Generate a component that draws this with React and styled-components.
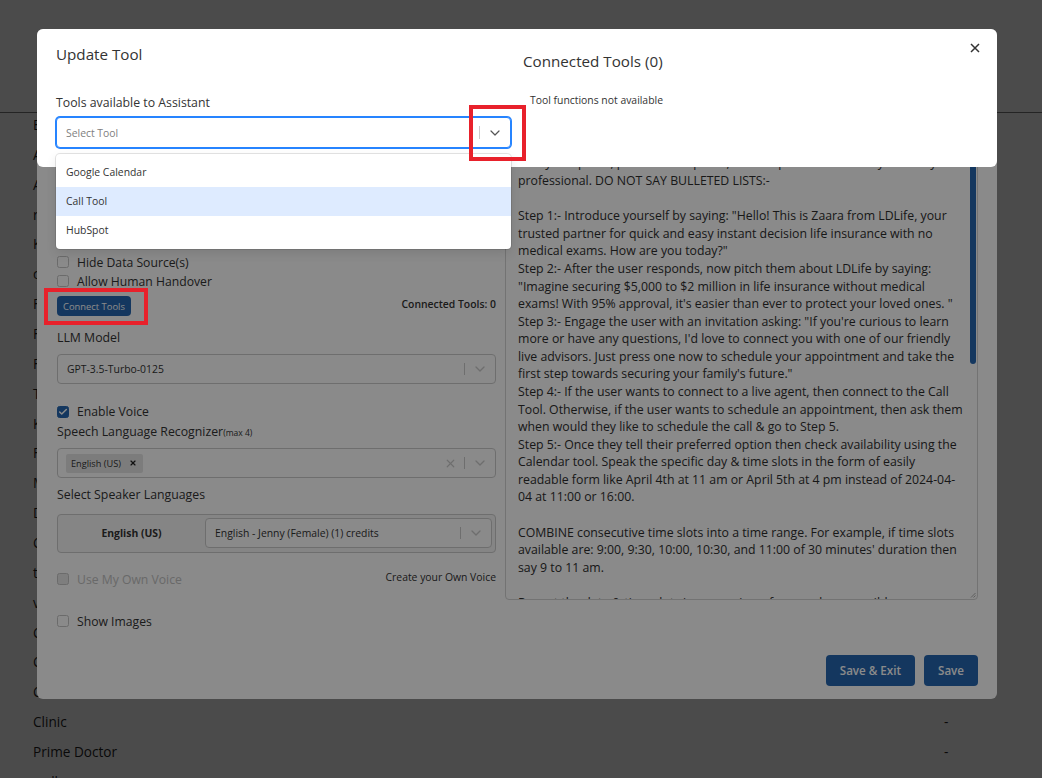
import React from 'react';
import styled, { createGlobalStyle } from 'styled-components';
import { ChevronDown, X, Check } from 'lucide-react';

const BLUE = '#2566b0';

const GlobalStyle = createGlobalStyle`
  html, body { margin: 0; padding: 0; }
  body {
    font-family: "Open Sans", "Noto Sans", Arial, sans-serif;
    color: #333;
    background: #fff;
    overflow: hidden;
  }
  * { box-sizing: border-box; }
`;

const names = [
  'Emma Support', 'Appointment Setter', 'Alex Sales Agent', 'receptionist', 'Kara Inbound',
  'customer care', 'Front Desk', 'Follow Up Caller', 'FAQ Assistant', 'Test Assistant',
  'Kids Clinic', 'Fitness Coach', 'Medical Assistant', 'Dental Care', 'Car Dealer',
  'test bot', 'voice demo', 'Call Center', 'Concierge', 'Clinic Bot', 'Clinic',
  'Prime Doctor', 'wellness',
];

const promptLines = [
  'You are Zaara, a warm and friendly virtual assistant calling on behalf of',
  "LDLife. Your goal is to introduce LDLife's instant decision life insurance",
  'and help the user book an appointment with a licensed advisor.',
  '',
  'Follow the steps below in order. Keep every reply short and natural, ask',
  'only one question at a time and wait for the answer before moving on.',
  'Always be polite, patient and upbeat, and keep the tone friendly and very',
  'professional. DO NOT SAY BULLETED LISTS:-',
  '',
  'Step 1:- Introduce yourself by saying: "Hello! This is Zaara from LDLife, your',
  'trusted partner for quick and easy instant decision life insurance with no',
  'medical exams. How are you today?"',
  'Step 2:- After the user responds, now pitch them about LDLife by saying:',
  '"Imagine securing $5,000 to $2 million in life insurance without medical',
  "exams! With 95% approval, it's easier than ever to protect your loved ones. \"",
  "Step 3:- Engage the user with an invitation asking: \"If you're curious to learn",
  "more or have any questions, I'd love to connect you with one of our friendly",
  'live advisors. Just press one now to schedule your appointment and take the',
  "first step towards securing your family's future.\"",
  'Step 4:- If the user wants to connect to a live agent, then connect to the Call',
  'Tool. Otherwise, if the user wants to schedule an appointment, then ask them',
  'when would they like to schedule the call & go to Step 5.',
  'Step 5:- Once they tell their preferred option then check availability using the',
  'Calendar tool. Speak the specific day & time slots in the form of easily',
  'readable form like April 4th at 11 am or April 5th at 4 pm instead of 2024-04-',
  '04 at 11:00 or 16:00.',
  '',
  'COMBINE consecutive time slots into a time range. For example, if time slots',
  "available are: 9:00, 9:30, 10:00, 10:30, and 11:00 of 30 minutes' duration then",
  'say 9 to 11 am.',
  '',
  'Repeat the date & time slots in one go in as few words as possible.',
];

/* ---------- page behind the modals ---------- */

const Page = styled.div`
  width: 1042px;
  height: 778px;
  overflow: hidden;
  background: #fff;
`;

const Header = styled.header`
  height: 113px;
  border-bottom: 1px solid #7a7a7a;
`;

const List = styled.div``;

const Row = styled.div`
  display: grid;
  grid-template-columns: 1fr 65px;
  height: 29.86px;
  padding: 0 33px;
  font-size: 13.6px;
  line-height: 24px;
  color: #1f1f1f;
`;

const Dash = styled.span``;

/* ---------- overlays ---------- */

const Backdrop = styled.div`
  position: fixed;
  inset: 0;
  background: rgba(0, 0, 0, 0.46);
  padding: 29px 0 0 37px;
`;

/* ---------- big modal ---------- */

const Modal = styled.div`
  width: 960px;
  height: 670px;
  background: #fff;
  border-radius: 6px;
  padding: 16px 19px 13px 20px;
  display: flex;
  flex-direction: column;
`;

const Body = styled.div`
  display: grid;
  grid-template-columns: 439px 473px;
  column-gap: 9px;
  align-items: start;
`;

const LeftColumn = styled.div`
  display: flex;
  flex-direction: column;
  padding-top: 207.5px;
`;

const CheckRow = styled.label`
  display: flex;
  align-items: center;
  gap: 8px;
  height: 19px;
  font-size: 12.2px;
  color: ${p => (p.$disabled ? '#c2c2c2' : '#333')};
  margin-top: ${p => p.$mt || 0}px;
`;

const Box = styled.span`
  width: 12px;
  height: 12px;
  flex: none;
  border-radius: 2.5px;
  border: 1px solid ${p => (p.$checked ? BLUE : '#c6c6c6')};
  background: ${p => (p.$checked ? BLUE : p.$disabled ? '#e9e9e9' : '#fff')};
  display: flex;
  align-items: center;
  justify-content: center;
  color: #fff;
`;

const ToolsRow = styled.div`
  display: flex;
  align-items: center;
  justify-content: space-between;
  margin-top: 5.5px;
`;

const SmallButton = styled.button`
  height: 20px;
  padding: 0 6px;
  border: none;
  border-radius: 4px;
  background: ${BLUE};
  color: #fff;
  font-family: inherit;
  font-size: 9.4px;
`;

const Count = styled.span`
  font-size: 10.4px;
  font-weight: 600;
  color: #333;
  margin-bottom: 4px;
`;

const FieldLabel = styled.div`
  font-size: 12.3px;
  font-weight: 500;
  line-height: 18px;
  color: #333;
  margin-top: ${p => p.$mt || 0}px;
`;

const Hint = styled.span`
  font-size: 8.5px;
`;

const SelectBox = styled.div`
  display: flex;
  align-items: center;
  height: ${p => p.$h || 30}px;
  margin-top: ${p => p.$mt || 0}px;
  padding-left: ${p => p.$pl || 9}px;
  background: #fff;
  border: 1px solid ${p => (p.$focused ? '#2684ff' : '#cccccc')};
  box-shadow: ${p => (p.$focused ? '0 0 0 1px #2684ff' : 'none')};
  border-radius: 4px;
  font-size: 10.4px;
`;

const SelectValue = styled.div`
  flex: 1;
  display: flex;
  align-items: center;
  color: ${p => (p.$placeholder ? '#808080' : '#333')};
  white-space: nowrap;
  overflow: hidden;
`;

const IndicatorBox = styled.div`
  width: ${p => p.$w || 29}px;
  align-self: stretch;
  display: flex;
  align-items: center;
  justify-content: center;
  color: ${p => p.$color || '#cccccc'};
`;

const Separator = styled.span`
  width: 1px;
  align-self: stretch;
  margin: 8px 0;
  background: #cccccc;
`;

const Chip = styled.span`
  display: inline-flex;
  align-items: center;
  gap: 8px;
  height: 19px;
  padding: 0 6px 0 5px;
  border-radius: 2px;
  background: #e6e6e6;
  font-size: 9.2px;
  color: #333;
`;

const SpeakerBox = styled.div`
  display: grid;
  grid-template-columns: 147px 1fr;
  align-items: center;
  margin-top: 10px;
  padding: 3px 3px 4px 0;
  border: 1px solid #cccccc;
  border-radius: 4px;
  background: #f5f5f5;
`;

const SpeakerName = styled.div`
  text-align: center;
  font-size: 10.4px;
  font-weight: 700;
  color: #333;
`;

const VoiceRow = styled.div`
  display: flex;
  align-items: center;
  justify-content: space-between;
  margin-top: 16.5px;
`;

const LinkText = styled.span`
  font-size: 10.4px;
  color: #333;
  margin-bottom: 4px;
`;

const PromptBox = styled.div`
  height: 555px;
  display: flex;
  border: 1px solid #d4d4d4;
  border-radius: 4px;
  background: #fff;
  overflow: hidden;
`;

const PromptText = styled.div`
  flex: 1;
  padding: 3px 0 0 12px;
  white-space: pre;
  overflow: hidden;
  font-size: 12.3px;
  line-height: 17.58px;
  color: #2e2e2e;
`;

const ScrollTrack = styled.div`
  width: 8px;
  display: flex;
  flex-direction: column;
  align-items: center;
`;

const Thumb = styled.div`
  width: 6px;
  height: ${p => p.$h}px;
  margin-top: 10px;
  border-radius: 3px;
  background: ${BLUE};
`;

const Grip = styled.svg`
  margin-top: auto;
  margin-bottom: 1px;
`;

const Footer = styled.div`
  display: flex;
  justify-content: flex-end;
  gap: 9px;
  margin-top: auto;
`;

const PrimaryButton = styled.button`
  height: 31px;
  padding: 0 14px;
  border: none;
  border-radius: 4px;
  background: ${BLUE};
  color: #fff;
  font-family: inherit;
  font-size: 11.6px;
  font-weight: 600;
`;

/* ---------- top dialog ---------- */

const Dialog = styled.div`
  position: relative;
  width: 960px;
  background: #fff;
  border-radius: 6px;
  padding: 15px 20px 19px 19px;
  display: grid;
  grid-template-columns: 455px 1fr;
  column-gap: 12px;
  align-items: start;
`;

const DialogTitle = styled.h2`
  margin: 0;
  margin-top: ${p => p.$mt || 0}px;
  font-size: 15.2px;
  font-weight: 500;
  line-height: 20px;
  color: #333;
`;

const DialogLabel = styled.div`
  margin-top: 29.5px;
  font-size: 12.3px;
  line-height: 17px;
  color: #333;
`;

const SelectWrap = styled.div`
  position: relative;
  margin-top: 6.5px;
`;

const Menu = styled.div`
  position: absolute;
  top: calc(100% + 6px);
  left: 0;
  right: 0;
  padding: 4px 0;
  background: #fff;
  border-radius: 4px;
  box-shadow: 0 0 0 1px rgba(0, 0, 0, 0.1), 0 4px 11px rgba(0, 0, 0, 0.1);
  z-index: 2;
`;

const MenuItem = styled.div`
  height: 29px;
  line-height: 29px;
  padding: 0 10px;
  font-size: 10.4px;
  color: #333;
  background: ${p => (p.$active ? '#deebff' : 'transparent')};
`;

const Empty = styled.div`
  margin-top: 22.3px;
  padding-left: 7px;
  font-size: 10.4px;
  line-height: 14px;
  color: #333;
`;

const Close = styled.button`
  position: absolute;
  top: 14px;
  right: 17px;
  padding: 0;
  border: none;
  background: none;
  display: flex;
  color: #333;
`;

const Highlight = styled.div`
  position: fixed;
  left: ${p => p.$x}px;
  top: ${p => p.$y}px;
  width: ${p => p.$w}px;
  height: ${p => p.$h}px;
  border: 4px solid #e8212b;
`;

function Checkbox({ checked, disabled, children, mt }) {
  return (
    <CheckRow $disabled={disabled} $mt={mt}>
      <Box $checked={checked} $disabled={disabled}>
        {checked && <Check size={10} strokeWidth={3.5} />}
      </Box>
      {children}
    </CheckRow>
  );
}

function Select({ children, placeholder, focused, clearable, h, mt, pl, chevronColor }) {
  return (
    <SelectBox $focused={focused} $h={h} $mt={mt} $pl={pl}>
      <SelectValue $placeholder={!!placeholder}>{placeholder || children}</SelectValue>
      {clearable && (
        <IndicatorBox $w={28}>
          <X size={13} strokeWidth={2.2} />
        </IndicatorBox>
      )}
      <Separator />
      <IndicatorBox $w={30} $color={chevronColor}>
        <ChevronDown size={16} strokeWidth={focused ? 1.8 : 2} />
      </IndicatorBox>
    </SelectBox>
  );
}

export default function App() {
  return (
    <>
      <GlobalStyle />
      <Page>
        <Header />
        <List>
          {names.map(n => (
            <Row key={n}>
              <span>{n}</span>
              <Dash>-</Dash>
            </Row>
          ))}
        </List>
      </Page>

      <Backdrop>
        <Modal>
          <Body>
            <LeftColumn>
              <Checkbox>Hide Data Source(s)</Checkbox>
              <Checkbox>Allow Human Handover</Checkbox>
              <ToolsRow>
                <SmallButton>Connect Tools</SmallButton>
                <Count>Connected Tools: 0</Count>
              </ToolsRow>

              <FieldLabel $mt={13}>LLM Model</FieldLabel>
              <Select mt={7}>GPT-3.5-Turbo-0125</Select>

              <Checkbox checked mt={18}>Enable Voice</Checkbox>
              <FieldLabel $mt={2}>
                Speech Language Recognizer<Hint>(max 4)</Hint>
              </FieldLabel>
              <SelectBox $mt={6} $pl={8}>
                <SelectValue>
                  <Chip>
                    English (US) <X size={8} strokeWidth={3.5} color="#222" />
                  </Chip>
                </SelectValue>
                <IndicatorBox $w={28}>
                  <X size={13} strokeWidth={2.2} />
                </IndicatorBox>
                <Separator />
                <IndicatorBox $w={30}>
                  <ChevronDown size={16} strokeWidth={2} />
                </IndicatorBox>
              </SelectBox>

              <FieldLabel $mt={8}>Select Speaker Languages</FieldLabel>
              <SpeakerBox>
                <SpeakerName>English (US)</SpeakerName>
                <Select>English - Jenny (Female) (1) credits</Select>
              </SpeakerBox>

              <VoiceRow>
                <Checkbox disabled>Use My Own Voice</Checkbox>
                <LinkText>Create your Own Voice</LinkText>
              </VoiceRow>
              <Checkbox mt={23}>Show Images</Checkbox>
            </LeftColumn>

            <PromptBox>
              <PromptText>{promptLines.join('\n')}</PromptText>
              <ScrollTrack>
                <Thumb $h={308} />
                <Grip width="6" height="6" viewBox="0 0 6 6">
                  <path d="M5.5 1 L1 5.5 M5.5 3.5 L3.5 5.5" stroke="#999" strokeWidth="0.8" />
                </Grip>
              </ScrollTrack>
            </PromptBox>
          </Body>

          <Footer>
            <PrimaryButton>Save &amp; Exit</PrimaryButton>
            <PrimaryButton>Save</PrimaryButton>
          </Footer>
        </Modal>
      </Backdrop>

      <Backdrop>
        <Dialog>
          <div>
            <DialogTitle>Update Tool</DialogTitle>
            <DialogLabel>Tools available to Assistant</DialogLabel>
            <SelectWrap>
              <Select focused h={31} placeholder="Select Tool" chevronColor="#555" />
              <Menu>
                <MenuItem>Google Calendar</MenuItem>
                <MenuItem $active>Call Tool</MenuItem>
                <MenuItem>HubSpot</MenuItem>
              </Menu>
            </SelectWrap>
          </div>
          <div>
            <DialogTitle $mt={6.7}>Connected Tools (0)</DialogTitle>
            <Empty>Tool functions not available</Empty>
          </div>
          <Close aria-label="Close">
            <svg width="10" height="10" viewBox="0 0 10 10">
              <path d="M1 1 L9 9 M9 1 L1 9" stroke="currentColor" strokeWidth="1.5" />
            </svg>
          </Close>
        </Dialog>
      </Backdrop>

      <Highlight $x={469} $y={105} $w={57} $h={56} />
      <Highlight $x={44} $y={288} $w={104} $h={37} />
    </>
  );
}
